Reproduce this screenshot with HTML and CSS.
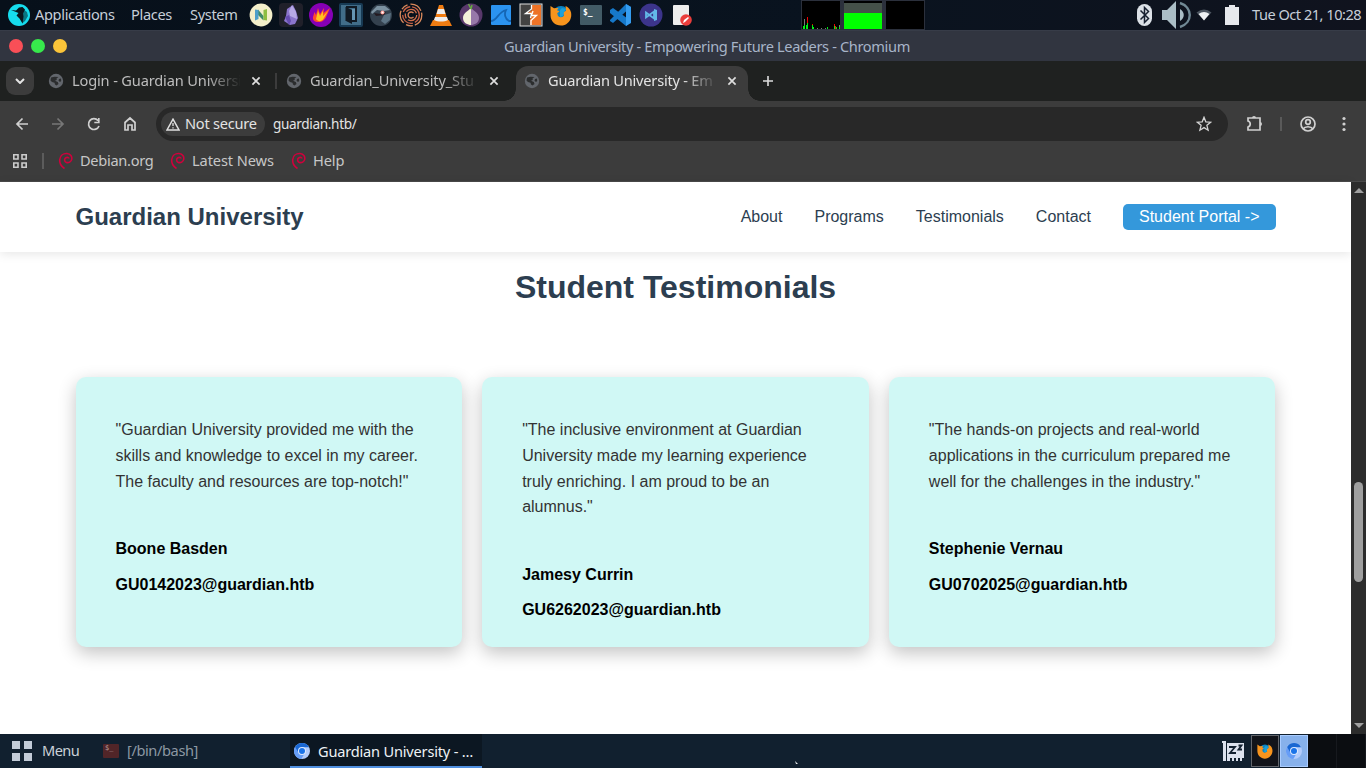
FILE: index.html
```html
<!DOCTYPE html>
<html lang="en">
<head>
<meta charset="utf-8">
<title>Guardian University - Empowering Future Leaders</title>
<link rel="stylesheet" href="styles.css">
</head>
<body>
<svg class="defs" width="0" height="0">
  <defs>
    <symbol id="globe" viewBox="0 0 16 16"><circle cx="8" cy="8" r="7.2" fill="#62666c"/><path d="M3 4.500 6.500 3.800 10.500 4 8.500 5.500 8.800 7 7 7.800 9.800 9 10.500 11 8.500 12.500 7 11.500 6.500 9.800 4 9 2.500 7.500ZM11 6 13 5.500 13.200 8 12 9 10.500 7.800Z" fill="#2b2d2e"/></symbol>
    <symbol id="close" viewBox="0 0 10 10"><path d="M1.4 1.4 8.6 8.6M8.6 1.4 1.4 8.6" stroke="#dedede" stroke-width="1.7"/></symbol>
    <symbol id="debian" viewBox="0 0 16 18"><path d="M6.500 16.500C3.500 14.500 1.300 11.300 1.700 7.500 2.200 3.300 5.500 1.300 9 1.500c3.500.3 5.300 2.900 4.800 5.700-.5 2.700-3.300 4-5.500 3.200-2.200-.8-2.200-3.700-.4-4.700 1.500-.8 3-.1 3 .9" fill="none" stroke="#d0003c" stroke-width="1.600"/></symbol>
    <symbol id="firefox" viewBox="0 0 22 22"><circle cx="11" cy="10" r="8" fill="#0a84c4"/><path d="M.5 2 4 4.3 8.5 4 7 6.3 9.5 7.2 7.2 9.2 8 12c2 2 4 1.6 6-.2l-1-3.2 3-1.8-.5-4.8C20 4 21.8 8 21.2 12.2 20.4 18 16 21.5 11 21.5 5 21.5.8 17.5.5 11.5Z" fill="#f7941d"/><path d="m10 6 2-2 4 1-2 3-1 4-3 1Z" fill="#1ba1db"/></symbol>
    <symbol id="chromium" viewBox="0 0 16 16"><circle cx="8" cy="8" r="8" fill="#b3ccfb"/><path d="M8 8 1 4.1A8 8 0 0 0 7.3 16L11 9.8Z" fill="#669df6"/><path d="M1.1 4A8 8 0 0 1 15 4.2H8L4.5 9.8Z" fill="#1967d2"/><circle cx="8" cy="8" r="4" fill="#dce9ff"/><circle cx="8" cy="8" r="3" fill="#1a73e8"/></symbol>
  </defs>
</svg>
<div class="desktop">
  <header class="panel">
    <svg class="parrot" width="22" height="22" viewBox="0 0 22 22"><circle cx="11" cy="11" r="11" fill="#16dced"/><path d="M13 3.500 19 8l1 4-3 5-3 2.500Z" fill="#0a7580"/><path d="M3 6 8 6.500 11 3.500 14.500 3l2.500 2.500-2 4 .5 3-1 7-3-5-3-3 2-2.500Z" fill="#0a161c"/></svg>
    <span class="ui menu-apps">Applications</span><span class="ui menu-places">Places</span><span class="ui menu-system">System</span>
    <div class="launchers">
      <svg viewBox="0 0 24 24"><circle cx="12" cy="12" r="11.4" fill="#f4efca"/><path d="M9 6.500 14.500 13v4.500L9 12Z" fill="#3f8a6a"/><path d="M6 6.500 9.500 7v9L6 17.500Z" fill="#4d9fc9"/><path d="M14.500 7 18 6v11.500l-3.500-.5Z" fill="#8fbe42"/></svg>
      <svg viewBox="0 0 24 24"><rect width="24" height="24" rx="4" fill="#20202a"/><path d="m8 6 6-4 3 6 2 7-3 6-5 1-6-4 2-5Z" fill="#8b75cc"/><path d="m13 2-3 6 1 5 7 3-1-7Z" fill="#b7a9e6"/><path d="m6 14 4-2 2 6-2 4Z" fill="#664cb0"/></svg>
      <svg viewBox="0 0 24 24"><circle cx="12" cy="12" r="12" fill="#8600b5"/><path d="M4 14 5.500 9l1.500 3 2-7 2 6 4-6-.5 5 6.500-5-3.500 8c-2 5-5 6-8 6-4 0-6-2-5.500-5Z" fill="#ff4a30"/><path d="m7 16 2-8 2 5 3-5v5l5-5-4 7c-2 4-6 4-8 1Z" fill="#ffc31f"/></svg>
      <svg viewBox="0 0 24 24"><rect x="1" y="1" width="22" height="22" rx="1" fill="#416d89" stroke="#173a54" stroke-width="2"/><path d="M7 4h10v14h-4M7.500 4v14" fill="none" stroke="#101923" stroke-width="2"/><path d="m7 4 6 3v14l-6-3Z" fill="#101923"/><path d="M13 6h3v11h-3Z" fill="#6695b2"/></svg>
      <svg viewBox="0 0 24 24"><circle cx="12" cy="12" r="11" fill="#34414e"/><path d="m2 9 6-6 8 0 5 4-6 1-7-1-5 4Z" fill="#7b91a0"/><path d="m15 12 7-2-1 7-5 4-4-3Z" fill="#5c7384"/><path d="m5 10 7 1 5-2-2 3-8 1Z" fill="#241a20"/><circle cx="13.500" cy="9.500" r="2" fill="#ff9b94"/><circle cx="13.500" cy="9.500" r="1" fill="#fff"/></svg>
      <svg viewBox="0 0 24 24" fill="none" stroke-width="1.300"><circle cx="12" cy="12" r="10.800" stroke="#d98a5c" stroke-dasharray="13 2 7 3"/><circle cx="12" cy="12" r="8.300" stroke="#c96146" stroke-dasharray="9 2 15 3"/><circle cx="12" cy="12" r="5.700" stroke="#d0704c" stroke-dasharray="12 2 5 2"/><path d="M14.500 10.200a3 3 0 1 0 0 3.600" stroke="#d9825a"/></svg>
      <svg viewBox="0 0 24 24"><path d="M4 17h16l3 6H1Z" fill="#ef7c12"/><path d="M10 2h4l5 16c-4 2-10 2-14 0Z" fill="#ef7c12"/><path d="M9 6h6l1.500 5h-9ZM6 14h12l1 3c-4 2-10 2-14 0Z" fill="#eee"/></svg>
      <svg viewBox="0 0 24 24"><circle cx="12" cy="12" r="11.5" fill="#58386b"/><path d="M12 5C9 8 4 10 4 15c0 5 5 7 8 7Z" fill="#f4f1d9"/><path d="M12 5c3 3 8 5 8 10 0 5-5 7-8 7Z" fill="#9778a9"/><path d="M12 6 9.500 1m2.500 5 1-4" stroke="#67a644" stroke-width="1.500"/></svg>
      <svg viewBox="0 0 24 24"><rect x="2" y="2" width="20" height="20" rx="1" fill="#2b93f0"/><path d="M2 18c6 0 7-9 15-11-2 4-1 9 3 11h2" fill="none" stroke="#1565b4" stroke-width="1.800"/></svg>
      <svg viewBox="0 0 24 24"><rect x="1" y="1" width="22" height="22" fill="#434343" stroke="#ddd"/><path d="M13 2h9v20H11v-6l3-5-5-1 4-3Z" fill="#ed7227"/><path d="M12.500 2v4L6.500 10.500h6L11.500 15M12 22v-4.500L17.500 12.500h-5L14 8" stroke="#fff" stroke-width="1.300" fill="none"/></svg>
      <svg viewBox="-1 -1 24 24"><use href="#firefox" width="22" height="22"/></svg>
      <svg viewBox="0 0 24 24"><rect x="1" y="2" width="22" height="20" rx="1" fill="#425b66"/><text x="4" y="12" class="prompt">$_</text></svg>
      <svg viewBox="0 0 24 24"><path d="m1 7 3-2 18 13-5 5L1 10Zm0 10 16-16 5 3L4 20l-3-2Z" fill="#1678c9"/><path d="m17 1 5 3v16l-5 3Z" fill="#349cf0"/></svg>
      <svg viewBox="0 0 24 24"><circle cx="12" cy="12" r="11.5" fill="#3c348b"/><path d="M7 9.500 15 15.500V8.500L7 14.500Z" fill="none" stroke="#63b8e8" stroke-width="1.800"/><path d="m15 6 3 1v10l-3 1Z" fill="#63b8e8"/></svg>
      <svg viewBox="0 0 24 24"><rect x="4" y="2" width="16" height="20" rx="1" fill="#ededed"/><circle cx="17" cy="17" r="5.8" fill="#ea3d3c"/><path d="m14 20 1-3 4-3 1 1-4 4Z" fill="#fff"/></svg>
    </div>
    <svg class="graphs" width="124" height="30" viewBox="0 0 124 30"><path d="M0 0h124v30H0Z" fill="#2b303c"/><path d="M1 1h38v28H1ZM43 1h38v28H43ZM85 1h38v28H85Z" fill="#000"/><path d="M43 3h38v10H43Z" fill="#455149"/><path d="M43 13h38v16H43Z" fill="#0f0"/><path d="M3.5 29V19M16.500 29v-1M20.500 29v-1M24.500 29v-1M38.500 29v-4" stroke="#777"/><path d="M6.500 27V17M11.500 26v-2M33.500 28v-4M34.500 29v-3" stroke="#f20000"/><path d="M2.500 29v-3M3.500 29v-4M5.500 29v-4M6.500 29v-6M11.500 29v-4M12.500 29v-2M26.500 29v-2M33.500 29v-3M35.500 29v-2M38.500 29v-2" stroke="#00ee16"/></svg>
    <svg class="tray" width="106" height="30" viewBox="0 0 106 30"><rect x="1" y="4" width="15" height="22" rx="7.5" fill="#dce1e7"/><path d="m4.500 10.500 8 8-4 4V7.500l4 4-8 8" fill="none" stroke="#172030" stroke-width="1.500"/><path d="M26 10h5l9-9v28l-9-9h-5Z" fill="#abbec6"/><path d="M44 9c5 3 5 9 0 12Z" fill="#abbec6"/><path d="M44 3c13 4 13 20 0 24" fill="none" stroke="#718995" stroke-width="2.400"/><path d="M60.500 12.500q7.500-6 15 0L68 20Z" fill="#4c5560"/><path d="M62.500 14q5.500-4 11 0L68 20.500Z" fill="#eef0f2"/><path d="M89 7h4V5h6v2h4v18H89Z" fill="#e6e8ec"/></svg>
    <span class="ui clock">Tue Oct 21, 10:28</span>
  </header>

  <div class="titlebar"><i class="dot red"></i><i class="dot green"></i><i class="dot yellow"></i><span class="ui window-title">Guardian University - Empowering Future Leaders - Chromium</span></div>

  <div class="tabs">
    <div class="search-tabs"><svg width="10" height="6" viewBox="0 0 10 6"><path d="m1 1 4 4 4-4" fill="none" stroke="#e3e3e3" stroke-width="2"/></svg></div>
    <div class="tab first"><svg class="favicon"><use href="#globe"/></svg><span class="ui tab-text">Login - Guardian Universi</span><svg class="x"><use href="#close"/></svg></div>
    <i class="tab-line"></i>
    <div class="tab second"><svg class="favicon"><use href="#globe"/></svg><span class="ui tab-text">Guardian_University_Stu</span><svg class="x"><use href="#close"/></svg></div>
    <div class="tab active"><svg class="favicon"><use href="#globe"/></svg><span class="ui tab-text">Guardian University - Em</span><svg class="x"><use href="#close"/></svg></div>
    <svg class="plus" width="12" height="12" viewBox="0 0 12 12"><path d="M6 1v10M1 6h10" stroke="#ddd" stroke-width="1.600"/></svg>
  </div>

  <div class="browser">
    <div class="toolbar">
      <svg class="nav-icons" width="124" height="18" viewBox="0 0 124 18"><g fill="none" stroke="#d0d0d0" stroke-width="1.700"><path d="M14 9H3m5.500-5.500L3 9l5.500 5.500"/><path d="M38 9h11m-5.500-5.500L49 9l-5.500 5.500" stroke="#777"/><path d="M84 5.500A5.400 5.400 0 1 0 85 11M84.800 3v4.500h-4.500"/><path d="M111 7.500 116 3l5 4.500V15h-3v-5h-4v5h-3Z"/></g></svg>
      <div class="address"><span class="security ui"><svg width="14" height="13" viewBox="0 0 14 13"><path d="M7 1.200 13 12H1Z" fill="none" stroke="#e0e0e0" stroke-width="1.500"/><path d="M7 5v3m0 1.300v1.300" stroke="#e0e0e0" stroke-width="1.300"/></svg><span class="security-label">Not secure</span></span><span class="ui url">guardian.htb/</span>
      <svg class="star" width="16" height="16" viewBox="0 0 16 16"><path d="m8 1.300 1.800 4.500 4.800.4-3.700 3.100 1.200 4.900L8 11.600l-4.100 2.600 1.200-4.900-3.700-3.100 4.800-.4Z" fill="none" stroke="#d4d4d4" stroke-width="1.300"/></svg></div>
      <svg class="actions" width="112" height="20" viewBox="0 0 112 20"><g fill="none" stroke="#d0d0d0" stroke-width="1.700"><path d="M6 4h12v12H6v-3c3-1 3-5 0-6Z"/><circle cx="66" cy="10" r="7"/><circle cx="66" cy="8" r="2.300"/><path d="M61 15c2-3 8-3 10 0"/></g><path d="M10 4a2 2 0 0 1 4 0m4 4a2 2 0 0 1 0 4" fill="#d0d0d0"/><path d="M39 3v14" stroke="#656565" stroke-width="1.500"/><g fill="#d0d0d0"><circle cx="102" cy="4.500" r="1.600"/><circle cx="102" cy="10" r="1.600"/><circle cx="102" cy="15.500" r="1.600"/></g></svg>
    </div>
    <div class="bookmarks">
      <svg class="bookmark-grid" width="14" height="14" viewBox="0 0 14 14"><path d="M.8.8H5V5H.8ZM9 .8h4.200V5H9ZM.8 9H5v4.200H.8ZM9 9h4.200v4.200H9Z" fill="none" stroke="#ccc" stroke-width="1.600"/></svg><i></i>
      <svg class="swirl"><use href="#debian"/></svg><span class="ui debian">Debian.org</span>
      <svg class="swirl"><use href="#debian"/></svg><span class="ui news">Latest News</span>
      <svg class="swirl"><use href="#debian"/></svg><span class="ui">Help</span>
    </div>
  </div>

  <main class="viewport">
    <div class="page">
      <nav class="site-nav"><div class="site-inner"><strong>Guardian University</strong><div class="links"><a>About</a><a>Programs</a><a>Testimonials</a><a>Contact</a><a class="portal">Student Portal -&gt;</a></div></div></nav>
      <section><h1>Student Testimonials</h1><div class="cards">
        <article><p>"Guardian University provided me with the skills and knowledge to excel in my career. The faculty and resources are top-notch!"</p><b>Boone Basden</b><b>GU0142023@guardian.htb</b></article>
        <article><p>"The inclusive environment at Guardian University made my learning experience truly enriching. I am proud to be an alumnus."</p><b>Jamesy Currin</b><b>GU6262023@guardian.htb</b></article>
        <article><p>"The hands-on projects and real-world applications in the curriculum prepared me well for the challenges in the industry."</p><b>Stephenie Vernau</b><b>GU0702025@guardian.htb</b></article>
      </div></section>
    </div>
    <div class="scrollbar"><i class="up"></i><i class="thumb"></i><i class="down"></i></div>
  </main>

  <footer class="taskbar">
    <svg class="menu-grid" width="20" height="20"><path d="M0 0h8v8H0ZM12 0h8v8h-8ZM0 12h8v8H0ZM12 12h8v8h-8Z" fill="#c3ccd8"/></svg><span class="ui menu">Menu</span>
    <svg class="terminal" width="16" height="14"><rect width="16" height="14" rx="1" fill="#512528"/><text x="2" y="6">$_</text></svg><span class="ui bash">[/bin/bash]</span>
    <div class="task"><svg width="16" height="16"><use href="#chromium"/></svg><span class="ui">Guardian University - …</span></div>
    <div class="taskbar-end"><svg class="sleep" width="24" height="22" viewBox="0 0 24 22"><path d="M1 1h4v20H2V3H1ZM6 3h17v15h-2v3h-2v-3h-2v3h-2v-3h-2v3h-2v-3H9v3H6Z" fill="#dce2ee"/><path d="M8 7h6L9 13h6M17.500 5.500h3l-3 4h3.500" fill="none" stroke="#132131" stroke-width="1.800"/></svg><div class="workspace"><svg width="16" height="16"><use href="#firefox"/></svg></div><div class="workspace selected"><svg width="16" height="16"><use href="#chromium"/></svg></div><div class="empty"></div><div class="empty"></div></div>
  </footer>
  <svg class="cursor" width="4" height="4"><path d="M0 0 3 3H1Z" fill="#e6e8ea"/></svg>
</div>
</body>
</html>
```
FILE: styles.css
```css
* { box-sizing: border-box; }
body { margin: 0; background: #0a1320; }
.defs { position: absolute; }
.desktop { width: 1366px; height: 768px; overflow: hidden; }
.desktop svg { display: block; flex-shrink: 0; }
.ui { font: 14.6px/20px "Noto Sans", sans-serif; letter-spacing: -.35px; white-space: nowrap; padding-bottom: 2px; }
.panel { height: 30px; display: flex; align-items: center; background: linear-gradient(90deg, #07101a, #09131f 60%, #10131e); color: #c6ced8; }
.parrot { margin-left: 8px; }
.menu-apps { margin-left: 5px; width: 96px; }
.menu-places { width: 59px; }
.menu-system { width: 59px; }
.launchers { display: flex; gap: 6px; width: 443px; }
.launchers svg { width: 24px; height: 24px; }
.prompt { font: bold 8px "DejaVu Sans Mono", monospace; fill: white; }
.graphs { margin-left: 109px; }
.tray { margin-left: 211px; }
.clock { margin-left: 10px; letter-spacing: -.5px; }
.titlebar { height: 31px; background: #313540; display: flex; align-items: center; gap: 8px; padding-left: 9px; border-top: 1px solid #373c48; }
.dot { width: 14px; height: 14px; border-radius: 50%; flex-shrink: 0; margin-top: -1px; }
.red { background: #f94f57; }
.green { background: #37e94c; }
.yellow { background: #fbc439; }
.window-title { color: #a7b4c8; flex: 1; padding: 0 0 0 429px; letter-spacing: -.36px; }
.tabs { height: 40px; background: #1f2120; display: flex; align-items: center; color: #bdbdbd; }
.search-tabs { width: 28px; height: 28px; border-radius: 9px; background: #3c3c3c; margin-left: 6px; display: grid; place-items: center; }
.tab { height: 34px; display: flex; align-items: center; flex-shrink: 0; }
.first { width: 242px; padding-left: 14px; }
.second { width: 240px; padding-left: 10px; }
.tab-line { width: 2px; height: 16px; margin: 0 -1px; background: #3c3c3c; }
.favicon { width: 16px; height: 16px; }
.tab-text { margin-left: 8px; width: 168px; letter-spacing: -.15px; mask-image: linear-gradient(90deg, #000 80%, transparent 101%); }
.active .tab-text { letter-spacing: -.22px; }
.x { width: 10px; height: 10px; margin-left: 11px; }
.active { width: 232px; height: 35px; margin-top: 5px; padding: 0 0 6px 8px; background: #3c3c3c; color: #e3e3e3; border-radius: 12px 12px 0 0; position: relative; }
.active::before, .active::after { content: ""; position: absolute; bottom: 0; width: 12px; height: 12px; }
.active::before { left: -12px; background: radial-gradient(circle at 0 0, transparent 11.5px, #3c3c3c 12px); }
.active::after { right: -12px; background: radial-gradient(circle at 100% 0, transparent 11.5px, #3c3c3c 12px); }
.plus { margin-left: 14px; }
.browser { height: 81px; background: #3c3c3c; border-bottom: 1px solid #4a4a4a; }
.toolbar { height: 46px; padding: 0 10px 0 14px; display: flex; align-items: center; }
.address { width: 1072px; height: 34px; margin-left: 18px; padding: 0 16px 0 5px; border-radius: 17px; background: #282828; display: flex; align-items: center; color: #e3e3e3; }
.security { height: 24px; width: 104px; border-radius: 12px; background: #3c3c3c; padding: 0 5px; display: flex; align-items: center; gap: 5px; letter-spacing: -.25px; }
.security-label { padding-bottom: 2px; }
.url { margin-left: 8px; padding-bottom: 0; font-size: 13.6px; }
.star { margin-left: auto; }
.actions { margin-left: 14px; }
.bookmarks { height: 34px; padding: 0 0 7px 13px; display: flex; align-items: center; color: #c7c7c7; }
.bookmarks i { width: 2px; height: 16px; margin: 0 15px 0 15px; background: #5c5c5c; }
.swirl { width: 16px; height: 18px; margin-left: -1px; }
.bookmarks .ui { margin-left: 6px; letter-spacing: -.1px; }
.bookmarks .debian { width: 91px; letter-spacing: -.3px; }
.news { width: 100px; }
.viewport { display: flex; height: 552px; background: white; }
.page { width: 1351px; font: 16px/25.6px "Liberation Sans", Arial, sans-serif; }
.site-nav { height: 70px; box-shadow: 0 2px 10px rgba(0,0,0,.1); }
.site-inner { width: 1200px; height: 70px; margin: auto; display: flex; align-items: center; justify-content: space-between; color: #2c3e50; }
.site-inner strong { font-size: 24px; }
.links { display: flex; align-items: center; gap: 32px; }
.portal { height: 26px; padding: 0 16px; background: #3498db; color: white; border-radius: 5px; }
h1 { font-size: 32px; line-height: 51px; color: #2c3e50; text-align: center; margin: 10px 0 64px; }
.cards { width: 1200px; margin: auto; display: grid; grid-template-columns: repeat(3, 1fr); gap: 20px; }
article { height: 270px; border-radius: 10px; background: #d0f8f5; padding: 40.4px 40px 0; box-shadow: 0 6px 18px rgba(0,0,0,.24); color: #333; }
article p { margin: 0 0 42px; }
article b { display: block; color: #000; margin-bottom: 10px; }
.scrollbar { width: 15px; height: 552px; background: #2c2c2c; display: flex; flex-direction: column; align-items: center; padding: 6px 0; }
.up { border: 5px solid transparent; border-top: 0; border-bottom: 5px solid #a0a0a0; }
.thumb { width: 9px; height: 100px; border-radius: 5px; background: #9f9f9f; margin-top: 289px; }
.down { margin-top: auto; border: 5px solid transparent; border-bottom: 0; border-top: 5px solid #a0a0a0; }
.taskbar { height: 34px; background: #11202f; display: flex; align-items: center; color: #cbd1d8; }
.menu-grid { margin-left: 12px; }
.menu { margin-left: 10px; width: 61px; letter-spacing: -.55px; }
.terminal text { font: 7px "DejaVu Sans Mono", monospace; fill: #b29b9d; }
.bash { margin-left: 8px; color: #8d98a3; width: 163px; letter-spacing: -.4px; }
.task { height: 34px; width: 192px; padding: 1px 4px 0; display: flex; align-items: center; gap: 8px; background: #0c1722; border-bottom: 2px solid #4f8fdf; color: #eef2f5; }
.task .ui { padding: 0; letter-spacing: -.2px; }
.taskbar-end { height: 34px; display: flex; align-items: center; margin-left: auto; }
.sleep { margin-right: 6px; }
.workspace { width: 28px; height: 32px; border: 1px solid #62656b; background: #12141a; display: grid; place-items: center; }
.selected { margin-left: 1px; background: #87b1eb; border-color: #a9ccff; }
.empty { width: 29px; height: 34px; background: #0b0d11; border-right: 1px solid #17191e; }
.cursor { position: absolute; left: 795px; top: 761px; }
```
